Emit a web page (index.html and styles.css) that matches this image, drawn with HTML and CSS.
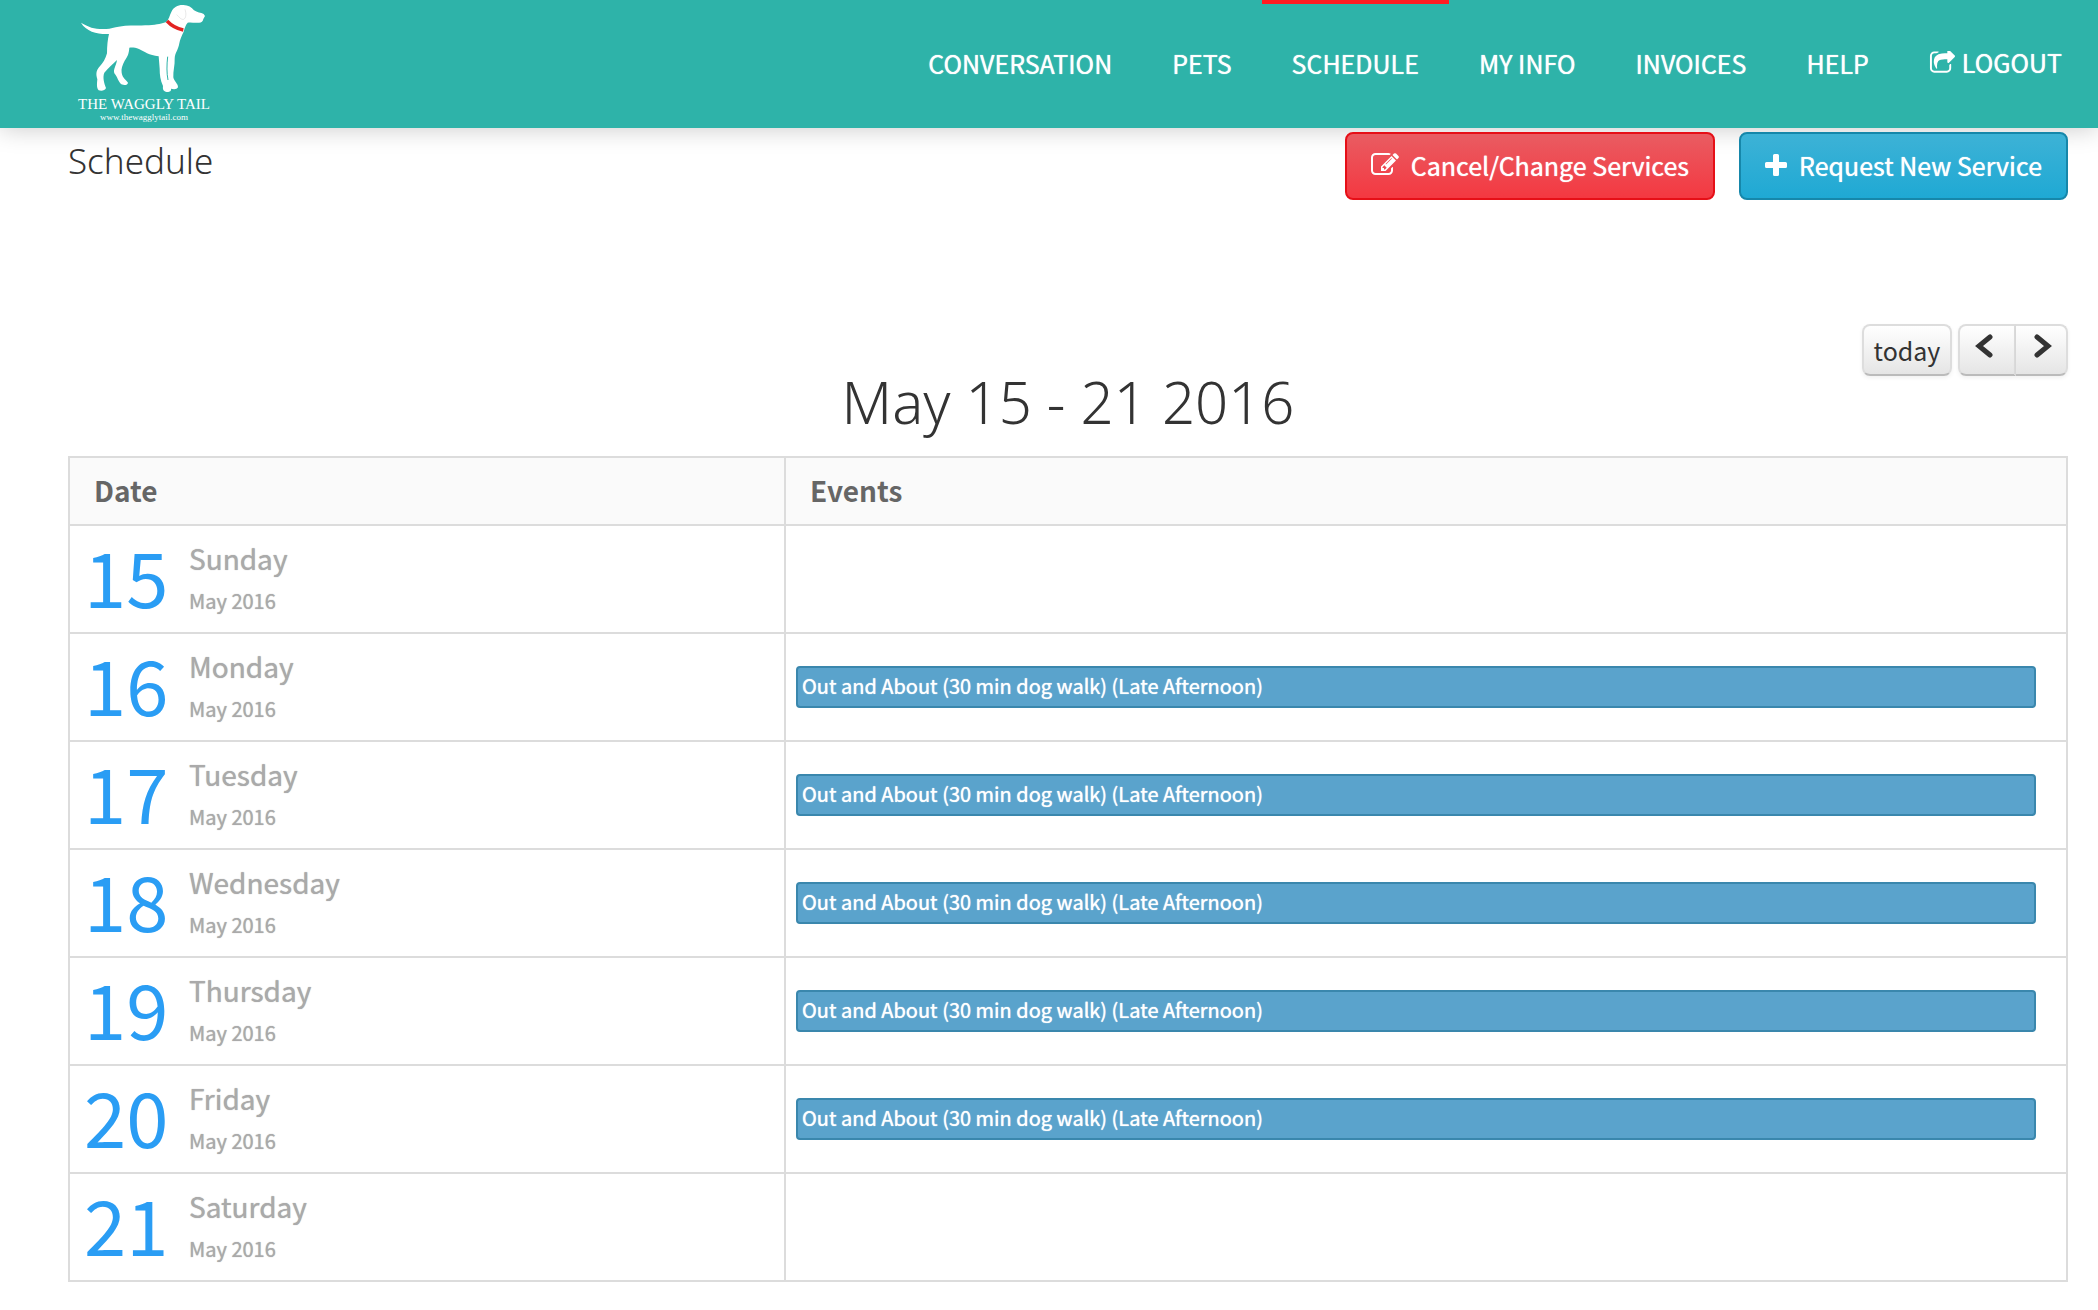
FILE: index.html
```html
<!DOCTYPE html>
<html lang="en">
<head>
<meta charset="utf-8">
<title>Schedule - The Waggly Tail</title>
<link rel="stylesheet" href="styles.css">
</head>
<body>
<header class="topbar">
  <a class="logo" href="#">
    <svg class="logo-dog" viewBox="90 0 390 279" aria-hidden="true">
      <path fill="#fff" d="M96 68C110 76 128 86 152 87C170 88 182 87 200 82C225 74 262 77 300 76C325 74 340 70 352 66C360 58 362 46 367 36C374 20 388 14 403 15C418 16 428 21 435 31C444 38 456 38 464 42L468 48L463 57C462 65 456 69 448 68C436 69 424 66 416 68C410 74 407 84 404 95C398 108 393 118 391 130C388 150 378 158 377 176C378 196 372 212 373 232C375 244 388 252 387 262C384 269 372 268 366 266C368 275 358 277 350 275C342 273 341 266 342 258C334 240 332 224 332 206L329 169C300 166 285 154 270 147C258 142 248 142 241 143C240 160 236 170 227 182C220 196 216 206 218 218C220 234 232 240 237 248C236 256 226 256 217 253C208 246 206 232 196 220C192 208 202 196 204 180C192 192 178 204 166 218C160 232 166 250 171 264C168 273 156 273 149 271C142 264 144 250 145 238C140 222 142 212 150 202C162 190 170 176 174 160C174 138 176 118 180 102C150 104 112 96 96 68Z"/>
      <path fill="none" stroke="#2eb3a9" stroke-width="3" d="M356 170C353 195 353 220 357 240"/>
      <path fill="none" stroke="#ddd" stroke-width="2" d="M408 28C412 40 412 54 404 58C396 60 390 50 383 44"/>
      <path fill="none" stroke="#e32322" stroke-width="10" d="M354 63C366 76 384 86 403 90"/>
    </svg>
    <span class="logo-name">THE WAGGLY TAIL</span>
    <span class="logo-url">www.thewagglytail.com</span>
  </a>
  <nav class="nav">
    <a href="#">CONVERSATION</a>
    <a href="#">PETS</a>
    <a class="active" href="#">SCHEDULE</a>
    <a href="#">MY INFO</a>
    <a href="#">INVOICES</a>
    <a href="#">HELP</a>
    <a class="logout" href="#"><svg viewBox="0 128 1792 1536" aria-hidden="true"><path fill="currentColor" d="M1472 989v259q0 119-84.500 203.500t-203.500 84.500h-832q-119 0-203.500-84.500t-84.500-203.500v-832q0-119 84.500-203.500t203.500-84.500h255q13 0 22.500 9.500t9.500 22.500q0 27-26 32-77 26-133 60-10 4-16 4h-112q-66 0-113 47t-47 113v832q0 66 47 113t113 47h832q66 0 113-47t47-113v-214q0-19 18-29 28-13 54-37 16-16 35-8 21 9 21 29zm237-496l-384 384q-18 19-45 19-12 0-25-5-39-17-39-59v-192h-160q-323 0-438 131-119 137-74 473 3 23-20 34-8 2-12 2-16 0-26-13-10-14-21-31t-39.500-68.500-49.500-99.500-38.500-114-17.500-122q0-49 3.500-91t14-90 28-88 47-81.500 68.500-74 94.500-61.500 124.500-48.500 159.500-30.500 196.500-11h160v-192q0-42 39-59 13-5 25-5 26 0 45 19l384 384q19 19 19 45t-19 45z"/></svg>LOGOUT</a>
  </nav>
</header>
<main class="page">
  <div class="page-head">
    <h1>Schedule</h1>
    <div class="actions">
      <button class="btn btn-danger" type="button"><svg class="icon-edit" viewBox="0 128 1792 1536" aria-hidden="true"><path fill="currentColor" d="M888 1184l116-116-152-152-116 116v56h96v96h56zm440-720q-16-16-33 1l-350 350q-17 17-1 33t33-1l350-350q17-17 1-33zm80 594v190q0 119-84.500 203.500t-203.500 84.500h-832q-119 0-203.500-84.500t-84.500-203.500v-832q0-119 84.500-203.500t203.500-84.500h832q63 0 117 25 15 7 18 23 3 17-9 29l-49 49q-14 14-32 8-23-6-45-6h-832q-66 0-113 47t-47 113v832q0 66 47 113t113 47h832q66 0 113-47t47-113v-126q0-13 9-22l64-64q15-15 35-7t20 29zm-96-738l288 288-672 672h-288v-288zm444 132l-92 92-288-288 92-92q28-28 68-28t68 28l152 152q28 28 28 68t-28 68z"/></svg>Cancel/Change Services</button>
      <button class="btn btn-info" type="button"><svg class="icon-plus" viewBox="0 0 22 22" aria-hidden="true"><path fill="currentColor" d="M9.500 0h3a1.500 1.500 0 0 1 1.500 1.500V8h6.500A1.500 1.500 0 0 1 22 9.500v3a1.500 1.500 0 0 1-1.500 1.500H14v6.500a1.500 1.500 0 0 1-1.500 1.500h-3A1.500 1.500 0 0 1 8 20.500V14H1.500A1.500 1.500 0 0 1 0 12.500v-3A1.500 1.500 0 0 1 1.500 8H8V1.500A1.500 1.500 0 0 1 9.500 0z"/></svg>Request New Service</button>
    </div>
  </div>
  <div class="cal-tools">
    <button class="tool today" type="button">today</button>
    <div class="tool-group">
      <button class="tool" type="button" aria-label="Previous"><svg viewBox="0 0 18 24" aria-hidden="true"><path fill="none" stroke="#333" stroke-width="5" stroke-linecap="round" d="M15 3L4 12L15 21"/></svg></button>
      <button class="tool" type="button" aria-label="Next"><svg viewBox="0 0 18 24" aria-hidden="true"><path fill="none" stroke="#333" stroke-width="5" stroke-linecap="round" d="M3 3L14 12L3 21"/></svg></button>
    </div>
  </div>
  <h2>May 15 - 21 2016</h2>
  <table class="week">
    <thead><tr><th class="col-date" scope="col">Date</th><th scope="col">Events</th></tr></thead>
    <tbody>
      <tr><td><div class="date"><span class="num">15</span><span class="day">Sunday<small>May 2016</small></span></div></td><td></td></tr>
      <tr><td><div class="date"><span class="num">16</span><span class="day">Monday<small>May 2016</small></span></div></td><td><a class="event" href="#">Out and About (30 min dog walk) (Late Afternoon)</a></td></tr>
      <tr><td><div class="date"><span class="num">17</span><span class="day">Tuesday<small>May 2016</small></span></div></td><td><a class="event" href="#">Out and About (30 min dog walk) (Late Afternoon)</a></td></tr>
      <tr><td><div class="date"><span class="num">18</span><span class="day">Wednesday<small>May 2016</small></span></div></td><td><a class="event" href="#">Out and About (30 min dog walk) (Late Afternoon)</a></td></tr>
      <tr><td><div class="date"><span class="num">19</span><span class="day">Thursday<small>May 2016</small></span></div></td><td><a class="event" href="#">Out and About (30 min dog walk) (Late Afternoon)</a></td></tr>
      <tr><td><div class="date"><span class="num">20</span><span class="day">Friday<small>May 2016</small></span></div></td><td><a class="event" href="#">Out and About (30 min dog walk) (Late Afternoon)</a></td></tr>
      <tr><td><div class="date"><span class="num">21</span><span class="day">Saturday<small>May 2016</small></span></div></td><td></td></tr>
    </tbody>
  </table>
</main>
</body>
</html>
```
FILE: styles.css
```css
* { box-sizing: border-box; }
body {
  margin: 0;
  background: #fff;
  color: #333;
  font-family: "Noto Sans CJK SC", "Noto Sans", sans-serif;
}
a { color: inherit; text-decoration: none; }
svg { display: block; }

.topbar {
  display: flex;
  justify-content: space-between;
  height: 128px;
  padding: 0 6px 0 78px;
  background: #2eb3a9;
  color: #fff;
  box-shadow: 0 0 24px rgba(0, 0, 0, 0.22);
}
.logo {
  display: flex;
  flex-direction: column;
  align-items: center;
  font-family: "Liberation Serif", serif;
}
.logo-dog { width: 130px; height: 93px; }
.logo-name { font-size: 15px; line-height: 22px; white-space: nowrap; }
.logo-url { font-size: 9px; line-height: 4px; }
.nav { display: flex; }
.nav a {
  padding: 43px 30px 0;
  border-top: 4px solid transparent;
  font-size: 25px;
  line-height: 32px;
}
.nav .active { border-color: #ff1c22; }
.nav .logout { display: flex; gap: 6px; padding-top: 42px; }
.logout svg { width: 27px; height: 24px; margin-top: 5px; }
.nav, .btn, .event, .day { text-shadow: 0 0 1px currentColor; }

.page { padding: 4px 30px 28px 68px; }
.page-head {
  display: flex;
  justify-content: space-between;
  align-items: flex-start;
}
h1, h2 { margin: 0; font-family: "Noto Sans", sans-serif; font-weight: 300; }
h1 { font-size: 35px; line-height: 58px; }
.actions { display: flex; gap: 24px; }
.btn {
  display: flex;
  align-items: center;
  height: 68px;
  padding: 0 24px 2px;
  border: 2px solid;
  border-radius: 8px;
  color: #fff;
  font: 25px/36px "Noto Sans CJK SC", "Noto Sans", sans-serif;
}
.btn-danger { border-color: #e60f17; background: linear-gradient(#e95c62, #f43841); }
.btn-info { border-color: #1687aa; background: linear-gradient(#3db2d6, #1fa9d4); }
.icon-edit { width: 28px; height: 24px; margin-right: 12px; }
.icon-plus { width: 22px; height: 22px; margin-right: 12px; }

.cal-tools {
  display: flex;
  justify-content: flex-end;
  gap: 6px;
  margin-top: 124px;
}
.tool {
  display: flex;
  height: 52px;
  padding: 8px 9px;
  border: 2px solid #ddd;
  border-bottom-color: #bbb;
  border-radius: 8px;
  background: linear-gradient(#fff, #e5e5e5);
  box-shadow: 0 2px 4px rgba(0, 0, 0, 0.06);
  color: #333;
  font: 25px/32px "Noto Sans CJK SC", "Noto Sans", sans-serif;
}
.today { width: 90px; justify-content: center; }
.tool-group { display: flex; }
.tool-group .tool { width: 58px; padding-left: 15px; }
.tool-group .tool:first-child { border-radius: 8px 0 0 8px; }
.tool-group .tool:last-child { width: 52px; padding-left: 18px; border-left: 0; border-radius: 0 8px 8px 0; }
.tool svg { width: 18px; height: 24px; }

h2 { margin-bottom: 28px; font-size: 58px; line-height: 52px; text-align: center; }
.week {
  width: 100%;
  border-collapse: collapse;
  table-layout: fixed;
}
.week th, .week td { border: 2px solid #dcdcdc; }
.week th {
  height: 68px;
  padding: 0 24px 2px;
  background: #fafafa;
  color: #666;
  font-size: 28px;
  line-height: 40px;
  text-align: left;
}
.col-date { width: 716px; }
.week td { height: 108px; padding: 0 30px 0 10px; }
.week td:first-child { padding-left: 14px; }
.date { display: flex; gap: 26px; align-items: flex-start; }
.num { width: 79px; color: #2a9df4; font-size: 76px; line-height: 78px; text-align: right; }
.day { color: #aaa; font-size: 28px; line-height: 44px; }
.day small { display: block; font-size: 20px; line-height: 42px; }
.event {
  display: block;
  padding: 0 4px 2px;
  border: 2px solid #3a87ad;
  border-radius: 4px;
  background: #5aa3cc;
  color: #fff;
  font-size: 20px;
  line-height: 36px;
}
```
